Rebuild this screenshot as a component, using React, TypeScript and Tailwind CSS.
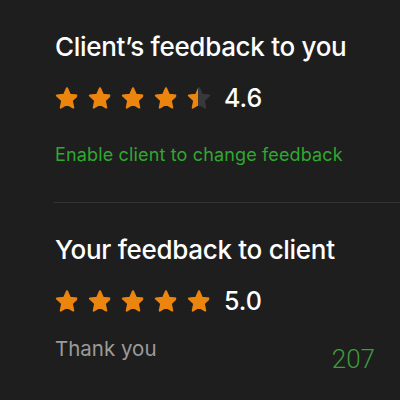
import React from 'react';

const Star = ({ fill = 1 }: { fill?: number }) => {
  const id = `half-${Math.round(fill * 100)}`;
  const d =
    'M12 2.2l3 6.6 7.2.8-5.4 4.9 1.5 7.1L12 18l-6.3 3.6 1.5-7.1-5.4-4.9 7.2-.8z';
  return (
    <svg width="24" height="24" viewBox="0 0 24 24">
      <defs>
        <linearGradient id={id} x1="0" x2="1" y1="0" y2="0">
          <stop offset={fill} stopColor="#ec850e" />
          <stop offset={fill} stopColor="#38383a" />
        </linearGradient>
      </defs>
      <path d={d} fill={`url(#${id})`} strokeLinejoin="round" stroke={`url(#${id})`} strokeWidth="2" />
    </svg>
  );
};

const Rating = ({ value, fills }: { value: string; fills: number[] }) => (
  <div className="flex h-6 items-center">
    <div className="flex gap-[9px]">
      {fills.map((f, i) => (
        <Star key={i} fill={f} />
      ))}
    </div>
    <span className="ml-[13px] text-[25px] font-medium leading-6 text-white">{value}</span>
  </div>
);

export default function App() {
  return (
    <div
      className="h-[400px] w-[400px] overflow-hidden bg-[#1e1e1e] pt-[31px]"
      style={{ fontFamily: 'Inter, "Liberation Sans", Arial, sans-serif' }}
    >
      <div className="pl-[55px]">
        <h2 className="h-8 text-[26px] font-medium leading-8 tracking-[-0.3px] text-white">
          Client’s feedback to you
        </h2>
        <div className="mt-[23px]">
          <Rating value="4.6" fills={[1, 1, 1, 1, 0.45]} />
        </div>
        <p className="mt-[33px] text-[18px] leading-6 tracking-[0.15px] text-[#30a830]">
          Enable client to change feedback
        </p>
      </div>

      <div className="ml-[54px] mt-[35px] h-px bg-[#343434]" />

      <div className="pl-[55px]">
        <h2 className="mt-[31px] h-8 text-[26px] font-medium leading-8 tracking-[-0.3px] text-white">
          Your feedback to client
        </h2>
        <div className="mt-[23px]">
          <Rating value="5.0" fills={[1, 1, 1, 1, 1]} />
        </div>
        <div className="mt-6 flex items-start justify-between pr-[25px]">
          <p className="text-[20.5px] leading-6 text-[#9b9b9b]">Thank you</p>
          <span
            className="mt-2 text-[26px] font-light leading-7 text-[#3d9a3d]"
            style={{ fontFamily: 'Roboto, sans-serif' }}
          >
            207
          </span>
        </div>
      </div>
    </div>
  );
}
